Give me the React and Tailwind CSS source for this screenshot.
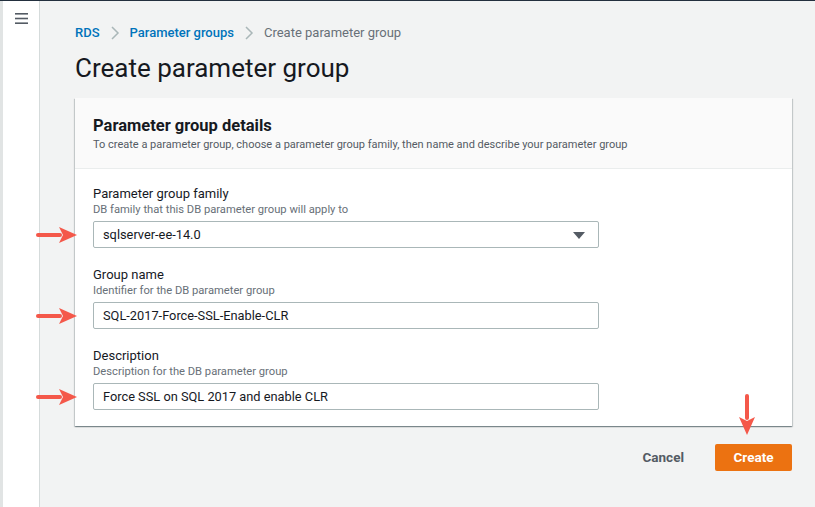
const RightArrow = () => (
  <svg width="42" height="18" viewBox="0 0 42 18" className="block">
    <rect x="0" y="7" width="26" height="4" rx="2" fill="#f4584a" />
    <path d="M23 1 L41 9 L23 17 L27 9 Z" fill="#f4584a" />
  </svg>
);

const DownArrow = () => (
  <svg width="18" height="42" viewBox="0 0 18 42" className="block">
    <rect x="7" y="0" width="4" height="26" rx="2" fill="#f4584a" />
    <path d="M1 23 L9 41 L17 23 L9 27 Z" fill="#f4584a" />
  </svg>
);

const Field = ({ label, hint, value, select }) => (
  <div className="relative">
    <div className="text-[13px] leading-[16px] text-[#16191f]">{label}</div>
    <div className="text-[11.2px] leading-[16px] text-[#687078]">{hint}</div>
    <div className="relative mt-[3px] w-[506px] h-[27px] border border-[#aab7b8] rounded-[2px] bg-white flex items-center px-[9px] text-[12.8px] text-[#16191f]">
      {value}
      {select && (
        <svg width="12" height="8" viewBox="0 0 12 8" className="absolute right-[13px] top-[10px]">
          <path d="M0 0 H12 L6 7 Z" fill="#545b64" />
        </svg>
      )}
    </div>
    <div className="absolute left-[-57px] bottom-[4px]">
      <RightArrow />
    </div>
  </div>
);

export default function App() {
  return (
    <div
      className="w-[815px] h-[507px] flex bg-[#f2f3f3] border-t border-[#232f3e] overflow-hidden"
      style={{ fontFamily: 'Roboto, "Open Sans", Arial, sans-serif' }}
    >
      <aside className="w-[40px] shrink-0 bg-white border-l-[3px] border-l-[#e1e4e4] border-r border-r-[#d5dbdb] flex justify-center pt-[12px]">
        <svg width="13" height="11" viewBox="0 0 13 11">
          <rect x="0" y="0" width="13" height="1.6" fill="#545b64" />
          <rect x="0" y="4.7" width="13" height="1.6" fill="#545b64" />
          <rect x="0" y="9.4" width="13" height="1.6" fill="#545b64" />
        </svg>
      </aside>

      <main className="flex-1 pl-[35px] pt-[23px]">
        <nav className="flex items-center text-[13px] leading-[18px]">
          <span className="text-[#0073bb] font-medium">RDS</span>
          <svg width="10" height="14" viewBox="0 0 10 14" className="mx-[10px]">
            <path d="M2 1 L8 7 L2 13" fill="none" stroke="#aab7b8" strokeWidth="1.5" />
          </svg>
          <span className="text-[#0073bb] font-medium">Parameter groups</span>
          <svg width="10" height="14" viewBox="0 0 10 14" className="mx-[10px]">
            <path d="M2 1 L8 7 L2 13" fill="none" stroke="#aab7b8" strokeWidth="1.5" />
          </svg>
          <span className="text-[#687078]">Create parameter group</span>
        </nav>

        <h1 className="mt-[10px] text-[26px] leading-[32px] text-[#16191f]">Create parameter group</h1>

        <section className="mt-[14px] w-[717px] bg-white shadow-[0_1px_1px_0_rgba(0,28,36,0.3),1px_1px_1px_0_rgba(0,28,36,0.15),-1px_1px_1px_0_rgba(0,28,36,0.15)]">
          <header className="h-[71px] bg-[#fafafa] border-b border-[#eaeded] px-[18px] pt-[18px]">
            <h2 className="text-[16.5px] leading-[20px] font-bold text-[#16191f]">Parameter group details</h2>
            <p className="mt-[1px] text-[11px] leading-[16px] text-[#545b64]">
              To create a parameter group, choose a parameter group family, then name and describe your parameter group
            </p>
          </header>
          <div className="px-[18px] pt-[17px] pb-[16px] flex flex-col gap-[19px]">
            <Field
              label="Parameter group family"
              hint="DB family that this DB parameter group will apply to"
              value="sqlserver-ee-14.0"
              select
            />
            <Field
              label="Group name"
              hint="Identifier for the DB parameter group"
              value="SQL-2017-Force-SSL-Enable-CLR"
            />
            <Field
              label="Description"
              hint="Description for the DB parameter group"
              value="Force SSL on SQL 2017 and enable CLR"
            />
          </div>
        </section>

        <div className="w-[717px] flex justify-end items-center mt-[18px]">
          <button className="text-[13.5px] font-bold text-[#545b64] mr-[31px]">Cancel</button>
          <div className="relative">
            <button className="w-[77px] h-[27px] bg-[#ec7211] rounded-[2px] text-white text-[13.5px] font-bold">
              Create
            </button>
            <div className="absolute left-[23px] top-[-50px]">
              <DownArrow />
            </div>
          </div>
        </div>
      </main>
    </div>
  );
}
